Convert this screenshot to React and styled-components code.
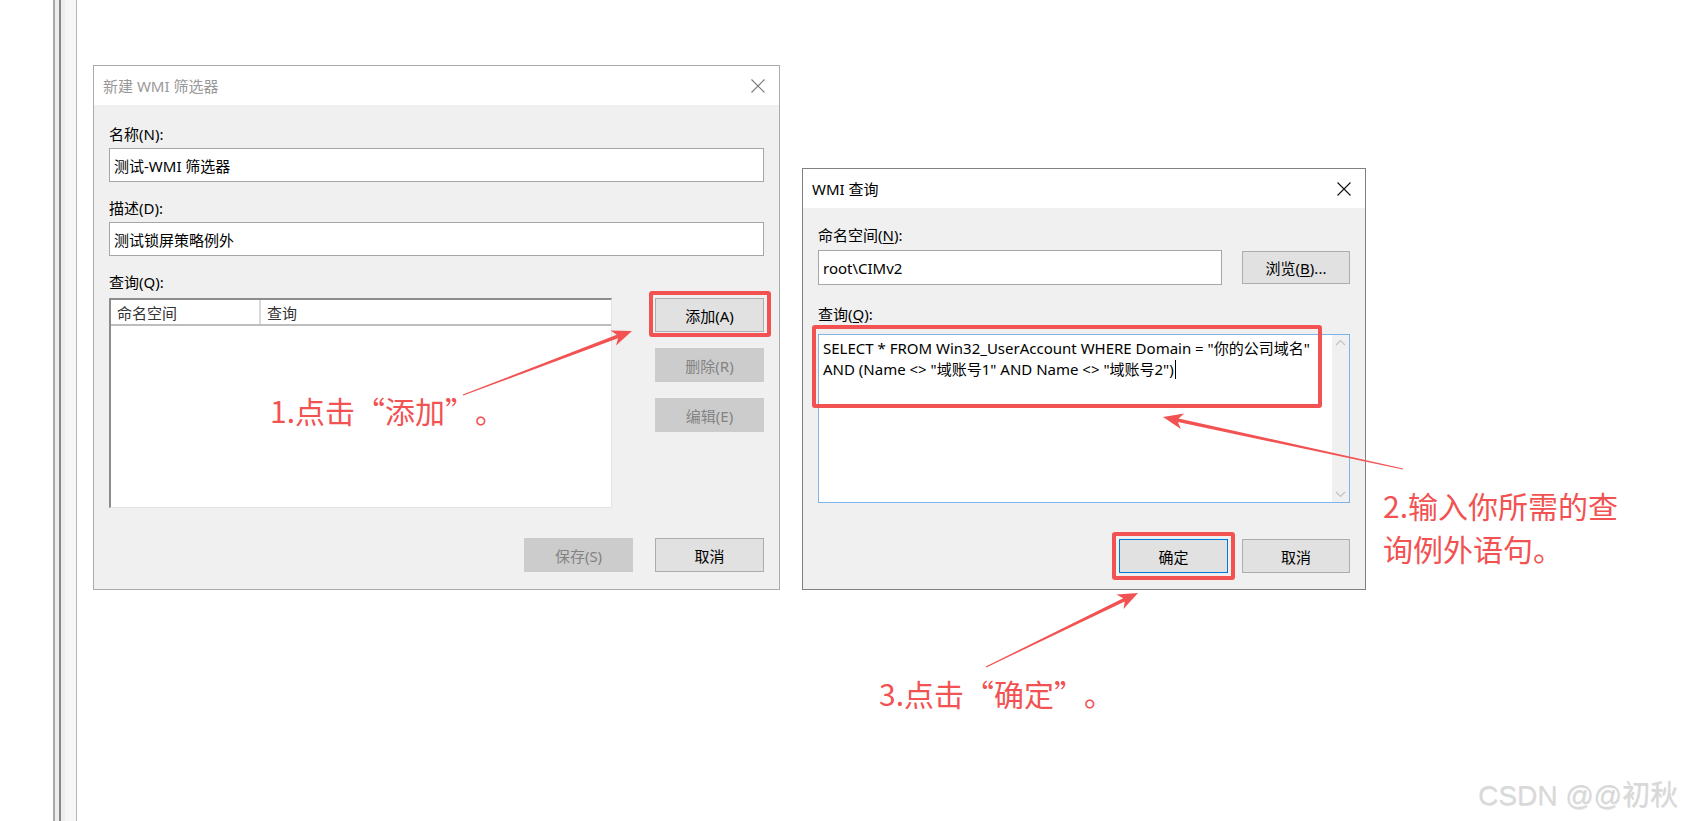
import React from "react";
import styled, { createGlobalStyle } from "styled-components";

const RED = "#f25252";

const GlobalStyle = createGlobalStyle`
  html, body {
    margin: 0;
    padding: 0;
    background: #fff;
    overflow: hidden;
  }
  body {
    font-family: "Noto Sans", "Noto Sans CJK SC", sans-serif;
  }
`;

const Page = styled.div`
  position: relative;
  width: 1685px;
  height: 821px;
  display: flex;
  background: #fff;
`;

const Rail = styled.div`
  width: 78px;
  height: 100%;
  background: linear-gradient(
    to right,
    #fff 0 53px,
    #a9a9a9 53px 55px,
    #ededed 55px 59px,
    #878787 59px 61px,
    #ededed 61px 65px,
    #f6f6f6 65px 76px,
    #b5b5b5 76px 77px,
    #fff 77px
  );
`;

const Window = styled.div`
  position: absolute;
  left: ${(p) => p.$x}px;
  top: ${(p) => p.$y}px;
  width: ${(p) => p.$w}px;
  height: ${(p) => p.$h}px;
  box-sizing: border-box;
  border: 1px solid ${(p) => (p.$active ? "#808080" : "#ababab")};
  background: #f0f0f0;
  display: flex;
  flex-direction: column;
`;

const TitleBar = styled.div`
  height: 39px;
  flex: none;
  background: #fff;
  display: flex;
  align-items: center;
  justify-content: space-between;
  padding: 0 14px 0 9px;
`;

const Title = styled.span`
  font-size: 15px;
  color: ${(p) => (p.$active ? "#000" : "#999")};
`;

const Body = styled.div`
  flex: 1;
  display: flex;
  flex-direction: column;
  padding: ${(p) => p.$pt}px 15px 0 15px;
`;

const Label = styled.div`
  font-size: 15px;
  line-height: 20px;
  color: #000;
  margin-top: ${(p) => p.$mt || 0}px;
  margin-bottom: ${(p) => p.$mb || 4}px;
`;

const Key = styled.span`
  text-decoration: underline;
  text-underline-offset: 2px;
`;

const TextBox = styled.div`
  box-sizing: border-box;
  height: ${(p) => p.$h || 34}px;
  width: ${(p) => (p.$w ? `${p.$w}px` : "auto")};
  border: 1px solid #a6a6a6;
  background: #fff;
  display: flex;
  align-items: center;
  padding-left: 4px;
  font-size: 15px;
  color: #000;
`;

const Row = styled.div`
  display: flex;
  align-items: ${(p) => p.$align || "flex-start"};
  justify-content: space-between;
`;

const ListView = styled.div`
  box-sizing: border-box;
  width: 503px;
  height: 210px;
  background: #fff;
  border-top: 2px solid #8c8c8c;
  border-left: 2px solid #8c8c8c;
  border-right: 1px solid #e3e3e3;
  border-bottom: 1px solid #e3e3e3;
`;

const ListHeader = styled.div`
  height: 24px;
  display: flex;
  border-bottom: 2px solid #bdbdbd;
  font-size: 15px;
  color: #333;
`;

const HeaderCell = styled.div`
  width: ${(p) => (p.$w ? `${p.$w}px` : "auto")};
  flex: ${(p) => (p.$w ? "none" : 1)};
  padding-left: 6px;
  display: flex;
  align-items: center;
  border-right: ${(p) => (p.$w ? "2px solid #d9d9d9" : "none")};
  box-sizing: border-box;
`;

const ButtonColumn = styled.div`
  display: flex;
  flex-direction: column;
  gap: 16px;
`;

const Button = styled.div`
  box-sizing: border-box;
  width: ${(p) => p.$w || 109}px;
  height: ${(p) => p.$h || 34}px;
  display: flex;
  align-items: center;
  justify-content: center;
  font-size: 15px;
  background: ${(p) => (p.$disabled ? "#cccccc" : "#e1e1e1")};
  color: ${(p) => (p.$disabled ? "#838383" : "#000")};
  border: 1px solid
    ${(p) => (p.$default ? "#0078d7" : p.$disabled ? "#cccccc" : "#adadad")};
  box-shadow: ${(p) => (p.$default ? "inset 0 0 0 1px #e1e1e1" : "none")};
`;

const Footer = styled.div`
  display: flex;
  justify-content: flex-end;
  gap: ${(p) => p.$gap}px;
  margin-top: ${(p) => p.$mt}px;
`;

const QueryBox = styled.div`
  box-sizing: border-box;
  height: 169px;
  border: 1px solid #7eb4ea;
  background: #fff;
  display: flex;
`;

const QueryText = styled.div`
  flex: 1;
  padding: 3px 4px;
  font-size: 15px;
  line-height: 21px;
  color: #000;
  white-space: pre;
`;

const Caret = styled.span`
  display: inline-block;
  width: 1px;
  height: 19px;
  background: #000;
  vertical-align: -4px;
  margin-left: 1px;
`;

const ScrollBar = styled.div`
  width: 17px;
  background: #f0f0f0;
  display: flex;
  flex-direction: column;
  justify-content: space-between;
  align-items: center;
  padding: 4px 0;
`;

const Highlight = styled.div`
  position: absolute;
  left: ${(p) => p.$x}px;
  top: ${(p) => p.$y}px;
  width: ${(p) => p.$w}px;
  height: ${(p) => p.$h}px;
  box-sizing: border-box;
  border: 4px solid ${RED};
  border-radius: 3px;
  pointer-events: none;
`;

const Note = styled.div`
  position: absolute;
  left: ${(p) => p.$x}px;
  top: ${(p) => p.$y}px;
  font-family: "Noto Sans CJK SC", sans-serif;
  font-size: 30px;
  line-height: 43px;
  color: ${RED};
  white-space: pre;
`;

const Quote = styled.span`
  display: inline-block;
  width: 1em;
  text-align: ${(p) => (p.$open ? "right" : "left")};
`;

const Overlay = styled.svg`
  position: absolute;
  left: 0;
  top: 0;
  pointer-events: none;
`;

const Watermark = styled.div`
  position: absolute;
  right: 7px;
  top: 773px;
  font-family: "Liberation Sans", "Noto Sans CJK SC", sans-serif;
  font-size: 28px;
  font-weight: 400;
  color: #d9d9d9;
  text-shadow: 0.5px 0.5px 0 rgba(0, 0, 0, 0.12);
  white-space: nowrap;
`;

const CloseIcon = ({ color }) => (
  <svg width="14" height="14" viewBox="0 0 14 14">
    <path d="M0.5 0.5 L13.5 13.5 M13.5 0.5 L0.5 13.5" stroke={color} strokeWidth="1.1" fill="none" />
  </svg>
);

const Chevron = ({ up }) => (
  <svg width="11" height="7" viewBox="0 0 11 7">
    <path d={up ? "M1 6 L5.5 1.5 L10 6" : "M1 1 L5.5 5.5 L10 1"} stroke="#c2c2c2" strokeWidth="1.2" fill="none" />
  </svg>
);

const arrowPoints = (tx, ty, px, py) => {
  const len = Math.hypot(px - tx, py - ty);
  const ux = (px - tx) / len;
  const uy = (py - ty) / len;
  const nx = -uy;
  const ny = ux;
  const L = 20;
  const W = 8;
  const w0 = 0.6;
  const w1 = 1.8;
  const bx = px - ux * L;
  const by = py - uy * L;
  const ix = px - ux * L * 0.78;
  const iy = py - uy * L * 0.78;
  const pts = [
    [tx + nx * w0, ty + ny * w0],
    [ix + nx * w1, iy + ny * w1],
    [bx + nx * W, by + ny * W],
    [px, py],
    [bx - nx * W, by - ny * W],
    [ix - nx * w1, iy - ny * w1],
    [tx - nx * w0, ty - ny * w0],
  ];
  return pts.map((p) => p.map((v) => v.toFixed(1)).join(",")).join(" ");
};

const arrows = [
  [463, 395, 632, 331],
  [1403, 469, 1163, 417],
  [986, 667, 1138, 593],
];

const NewFilterDialog = () => (
  <Window $x={93} $y={65} $w={687} $h={525}>
    <TitleBar>
      <Title>新建 WMI 筛选器</Title>
      <CloseIcon color="#7a7a7a" />
    </TitleBar>
    <Body $pt={19}>
      <Label>名称(N):</Label>
      <TextBox>测试-WMI 筛选器</TextBox>
      <Label $mt={16}>描述(D):</Label>
      <TextBox>测试锁屏策略例外</TextBox>
      <Label $mt={16} $mb={6}>查询(Q):</Label>
      <Row>
        <ListView>
          <ListHeader>
            <HeaderCell $w={150}>命名空间</HeaderCell>
            <HeaderCell>查询</HeaderCell>
          </ListHeader>
        </ListView>
        <ButtonColumn>
          <Button>添加(A)</Button>
          <Button $disabled>删除(R)</Button>
          <Button $disabled>编辑(E)</Button>
        </ButtonColumn>
      </Row>
      <Footer $gap={22} $mt={30}>
        <Button $disabled>保存(S)</Button>
        <Button>取消</Button>
      </Footer>
    </Body>
  </Window>
);

const QueryDialog = () => (
  <Window $active $x={802} $y={168} $w={564} $h={422}>
    <TitleBar>
      <Title $active>WMI 查询</Title>
      <CloseIcon color="#111" />
    </TitleBar>
    <Body $pt={17}>
      <Label $mb={5}>
        命名空间(<Key>N</Key>):
      </Label>
      <Row $align="center">
        <TextBox $w={404} $h={35}>root\CIMv2</TextBox>
        <Button $w={108} $h={33}>
          浏览(<Key>B</Key>)...
        </Button>
      </Row>
      <Label $mt={19} $mb={10}>
        查询(<Key>Q</Key>):
      </Label>
      <QueryBox>
        <QueryText>
          {'SELECT * FROM Win32_UserAccount WHERE Domain = "你的公司域名"\nAND (Name <> "域账号1" AND Name <> "域账号2")'}
          <Caret />
        </QueryText>
        <ScrollBar>
          <Chevron up />
          <Chevron />
        </ScrollBar>
      </QueryBox>
      <Footer $gap={14} $mt={36}>
        <Button $default>确定</Button>
        <Button $w={108}>取消</Button>
      </Footer>
    </Body>
  </Window>
);

export default function App() {
  return (
    <Page>
      <GlobalStyle />
      <Rail />
      <NewFilterDialog />
      <QueryDialog />

      <Highlight $x={649} $y={291} $w={122} $h={46} />
      <Highlight $x={812} $y={325} $w={510} $h={83} />
      <Highlight $x={1112} $y={532} $w={123} $h={48} />

      <Overlay width="1685" height="821">
        {arrows.map((a, i) => (
          <polygon key={i} points={arrowPoints(...a)} fill={RED} />
        ))}
      </Overlay>

      <Note $x={270} $y={389}>
        1.点击<Quote $open>“</Quote>添加<Quote>”</Quote>。
      </Note>
      <Note $x={1383} $y={484}>{"2.输入你所需的查\n询例外语句。"}</Note>
      <Note $x={879} $y={672}>
        3.点击<Quote $open>“</Quote>确定<Quote>”</Quote>。
      </Note>

      <Watermark>CSDN @@初秋</Watermark>
    </Page>
  );
}
